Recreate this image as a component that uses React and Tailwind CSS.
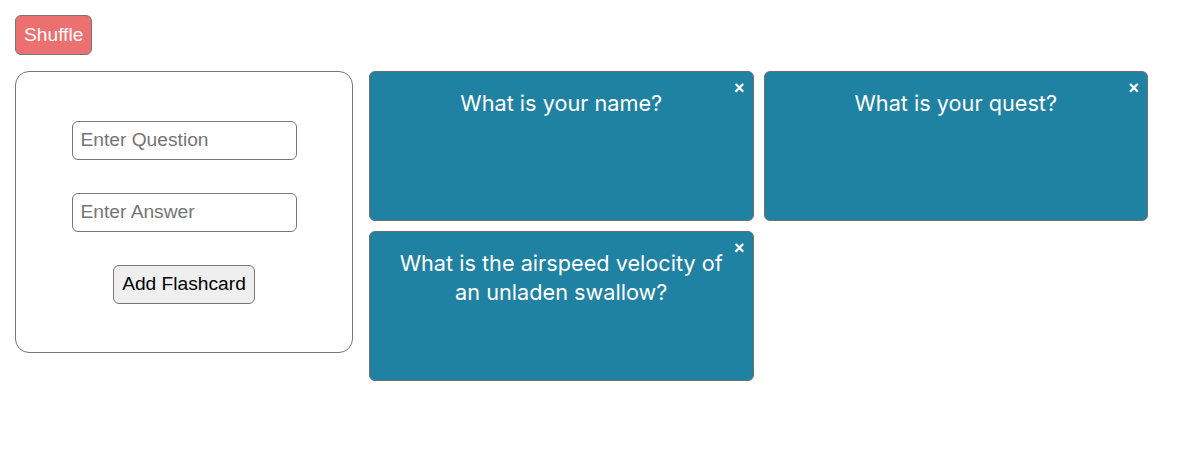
import React, { useState } from "react";

const initialCards = [
  { id: 1, question: "What is your name?" },
  { id: 2, question: "What is your quest?" },
  { id: 3, question: "What is the airspeed velocity of an unladen swallow?" },
];

const Flashcard = ({ card, onRemove }) => {
  return (
    <div className="relative h-[150px] rounded-md border border-[#6f6f6f] bg-[#1f82a3] px-6 pt-[17px] text-center">
      <button
        onClick={() => onRemove(card.id)}
        className="absolute right-[8px] top-[7px] text-[18px] font-bold leading-none text-white"
      >
        ×
      </button>
      <p className="text-[21.7px] leading-[29px] text-white" style={{ fontFamily: "Inter, sans-serif" }}>
        {card.question}
      </p>
    </div>
  );
};

const App = () => {
  const [cards, setCards] = useState(initialCards);
  const [question, setQuestion] = useState("");
  const [answer, setAnswer] = useState("");

  const handleAdd = () => {
    if (!question) return;
    setCards([...cards, { id: Date.now(), question }]);
    setQuestion("");
    setAnswer("");
  };

  const handleShuffle = () => {
    setCards([...cards].sort(() => Math.random() - 0.5));
  };

  return (
    <div className="min-h-screen bg-white p-[15px] font-['Liberation_Sans',Arial,sans-serif]">
      <button
        onClick={handleShuffle}
        className="h-[40px] rounded-md border border-[#767676] bg-[#ec7070] px-2 text-[19.2px] text-white"
      >
        Shuffle
      </button>

      <div className="mt-[16px] flex items-start gap-[16px]">
        <div className="flex h-[282px] w-[338px] flex-col items-center justify-center gap-[33px] rounded-[14px] border border-[#767676]">
          <input
            value={question}
            onChange={(e) => setQuestion(e.target.value)}
            placeholder="Enter Question"
            className="h-[39px] w-[225px] rounded-md border border-[#767676] px-2 text-[19.2px] placeholder-[#757575] focus:outline-none"
          />
          <input
            value={answer}
            onChange={(e) => setAnswer(e.target.value)}
            placeholder="Enter Answer"
            className="h-[39px] w-[225px] rounded-md border border-[#767676] px-2 text-[19.2px] placeholder-[#757575] focus:outline-none"
          />
          <button
            onClick={handleAdd}
            className="h-[39px] rounded-md border border-[#767676] bg-[#efefef] px-2 text-[19.2px] text-black"
          >
            Add Flashcard
          </button>
        </div>

        <div className="grid w-[779px] grid-cols-2 gap-[10px]">
          {cards.map((card) => (
            <Flashcard key={card.id} card={card} onRemove={(id) => setCards(cards.filter((c) => c.id !== id))} />
          ))}
        </div>
      </div>
    </div>
  );
};

export default App;
